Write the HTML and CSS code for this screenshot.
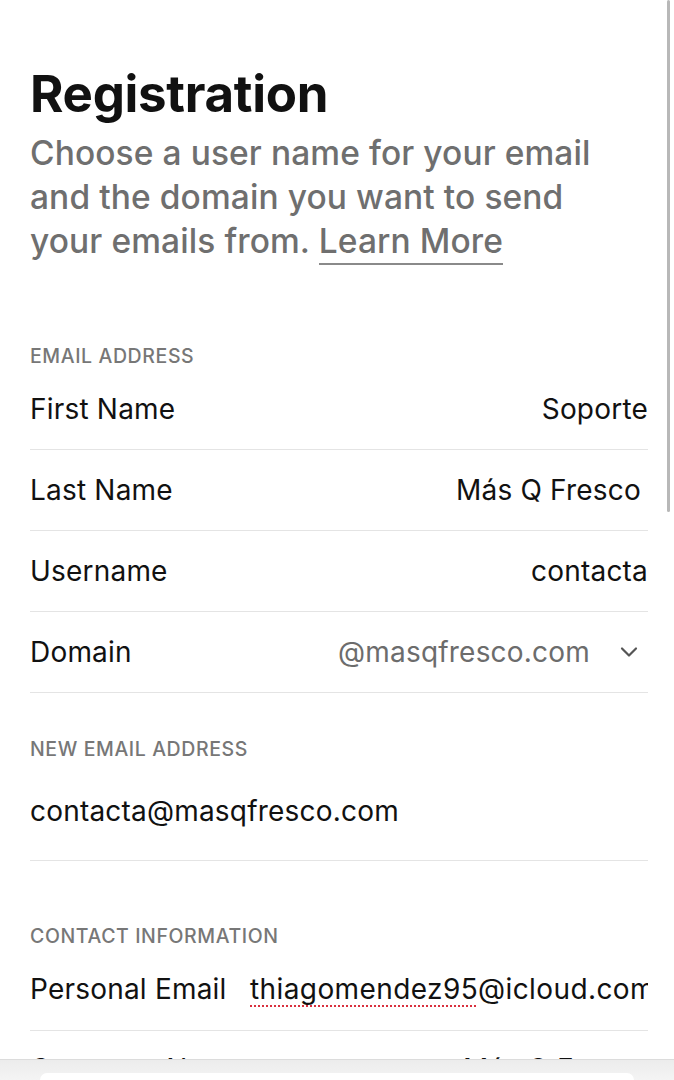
FILE: index.html
```html
<!DOCTYPE html>
<html lang="en">
<head>
<meta charset="utf-8">
<title>Registration</title>
<link rel="stylesheet" href="styles.css">
</head>
<body>
<main class="page">
  <header class="intro">
    <h1 class="title">Registration</h1>
    <p class="lead">Choose a user name for your email and the domain you want to send your emails from. <a class="learn" href="#">Learn More</a></p>
  </header>

  <section class="group group-first">
    <h2 class="label">EMAIL ADDRESS</h2>
    <div class="row row-first"><span class="key">First Name</span><span class="val">Soporte</span></div>
    <div class="row"><span class="key">Last Name</span><span class="val val-pad">Más Q Fresco</span></div>
    <div class="row"><span class="key">Username</span><span class="val">contacta</span></div>
    <div class="row"><span class="key">Domain</span>
      <span class="select"><span class="muted">@masqfresco.com</span>
        <svg class="chev" width="18" height="12" viewBox="0 0 18 12"><path d="M2 2.5 L9 9.5 L16 2.5" fill="none" stroke="#555" stroke-width="2.2" stroke-linecap="round" stroke-linejoin="round"/></svg>
      </span>
    </div>
  </section>

  <section class="group group-new">
    <h2 class="label">NEW EMAIL ADDRESS</h2>
    <div class="row row-tall"><span class="key">contacta@masqfresco.com</span></div>
  </section>

  <section class="group group-contact">
    <h2 class="label">CONTACT INFORMATION</h2>
    <div class="row row-clip"><span class="key key-fixed">Personal Email</span><span class="val-over"><span class="spell">thiagomendez95</span>@icloud.com</span></div>
    <div class="row row-last"><span class="key">Company Name</span><span class="val">Más Q Fresco</span></div>
  </section>
</main>

<div class="scrollbar"></div>
<div class="toolbar"><div class="toolbar-tab"></div></div>
</body>
</html>
```

FILE: styles.css
```css
html, body {
  margin: 0;
  padding: 0;
  background: #ffffff;
}

body {
  font-family: "Inter", "Liberation Sans", sans-serif;
  color: #111111;
  overflow: hidden;
  height: 1080px;
}

.page {
  padding: 0 26px 0 30px;
}

.intro {
  padding-top: 64px;
}

.title {
  margin: 0;
  font-size: 51px;
  line-height: 60px;
  font-weight: 700;
  letter-spacing: -0.3px;
  color: #111;
}

.lead {
  margin: 7px 0 0;
  max-width: 600px;
  font-size: 33.5px;
  line-height: 44px;
  color: #6f6f6f;
  font-weight: 500;
  letter-spacing: 0.1px;
}

.learn {
  color: #6f6f6f;
  text-decoration: none;
  border-bottom: 2px solid #8a8a8a;
  padding-bottom: 2px;
}

.group-first { margin-top: 81px; }
.group-new { margin-top: 44px; }
.group-contact { margin-top: 63px; }

.label {
  margin: 0;
  font-size: 19.5px;
  line-height: 24px;
  font-weight: 500;
  color: #777777;
  letter-spacing: 0.6px;
}

.row {
  display: flex;
  align-items: center;
  justify-content: space-between;
  height: 80px;
  border-bottom: 1.5px solid #e4e4e4;
  font-size: 28px;
  letter-spacing: 0.2px;
}

.row-first {
  height: 81px;
}

.row-tall {
  height: 99px;
}

.row-clip {
  height: 82px;
}

.row-last {
  height: 75px;
}

.key {
  white-space: nowrap;
}

.val {
  white-space: nowrap;
}

.val-pad {
  padding-right: 7px;
}

.select {
  display: flex;
  align-items: center;
  gap: 30px;
  padding-right: 10px;
}

.muted {
  color: #6c6c6c;
}

.row-clip {
  justify-content: flex-start;
  overflow: hidden;
}

.key-fixed {
  flex: none;
  width: 220px;
}

.val-over {
  white-space: nowrap;
  letter-spacing: 0.4px;
}

.spell {
  text-decoration: underline dotted #d9303e;
  text-decoration-thickness: 2px;
  text-underline-offset: 6px;
}

.scrollbar {
  position: fixed;
  top: 0;
  right: 4px;
  width: 3px;
  height: 512px;
  border-radius: 2px;
  background: #b8b8b8;
}

.toolbar {
  position: fixed;
  left: 0;
  right: 0;
  bottom: 0;
  height: 20px;
  background: linear-gradient(#ececec, #f4f4f4);
  border-top: 1px solid #dcdcdc;
}

.toolbar-tab {
  position: absolute;
  left: 40px;
  right: 40px;
  bottom: 0;
  height: 7px;
  background: #ffffff;
  border-radius: 14px 14px 0 0;
}
```
